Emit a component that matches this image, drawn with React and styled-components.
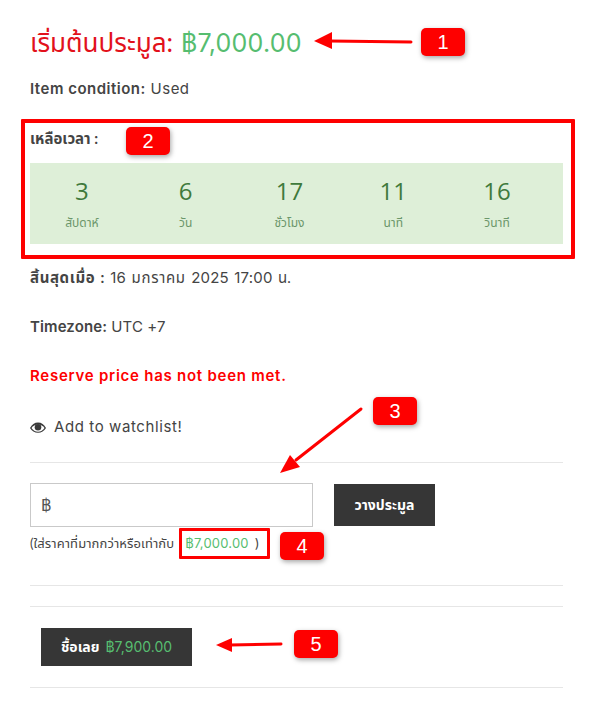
import React from "react";
import styled, { createGlobalStyle } from "styled-components";

const Global = createGlobalStyle`
  html, body { margin: 0; padding: 0; background: #fff; }
  #root { width: 606px; height: 702px; overflow: hidden; position: relative; }
`;
const Page = styled.div`
  position: relative;
  width: 606px;
  height: 702px;
  box-sizing: border-box;
  padding: 0 43px 0 30px;
  font-family: "Inter", "Noto Sans", "Liberation Sans", sans-serif;
  font-size: 15px;
  color: #444;
  overflow: hidden;
`;
const Thai = styled.span`
  font-family: "Lato", "Noto Sans", "Noto Sans Thai", "Liberation Sans", sans-serif;
  font-weight: ${(p) => p.$weight || "inherit"};
  letter-spacing: ${(p) => p.$spacing || 0}px;
`;
const Heading = styled.h2`
  margin: 0;
  padding-top: 24px;
  height: 36px;
  line-height: 36px;
  font-size: 26px;
  font-weight: 400;
  color: #e2111b;
  white-space: nowrap;
`;
const Green = styled.span`
  color: #56bd70;
`;
const HeadPrice = styled(Green)`
  margin-left: 8px;
  font-size: 25px;
  letter-spacing: 0.2px;
`;
const Line = styled.p`
  margin: ${(p) => p.$top}px 0 0;
  height: 24px;
  line-height: 24px;
  font-size: 15px;
  color: ${(p) => p.$color || "#444"};
  letter-spacing: ${(p) => p.$spacing || 0}px;
  word-spacing: ${(p) => p.$words || 0}px;
  white-space: nowrap;
`;
const Strong = styled.b`
  font-weight: 600;
`;
const Counter = styled.div`
  display: grid;
  grid-template-columns: repeat(5, 1fr);
  margin-top: 13px;
  height: 81px;
  padding-right: 14px;
  background: #deefd8;
`;
const Cell = styled.div`
  display: flex;
  flex-direction: column;
  align-items: center;
  color: #3f7a3c;
`;
const Num = styled.span`
  margin-top: 12px;
  height: 32px;
  line-height: 32px;
  font-family: "Open Sans", sans-serif;
  font-size: 24px;
`;
const Unit = styled(Thai)`
  margin-top: 6px;
  height: 20px;
  line-height: 20px;
  font-size: 12px;
  color: #6b966a;
`;
const Watch = styled(Line)`
  display: flex;
  align-items: center;
  gap: 8px;
`;
const Rule = styled.hr`
  margin: ${(p) => p.$top}px 0 0;
  height: 1px;
  border: 0;
  background: #e6e6e6;
`;
const BidRow = styled.div`
  display: flex;
  align-items: center;
  gap: 21px;
  margin-top: 20px;
`;
const Field = styled.div`
  box-sizing: border-box;
  width: 283px;
  height: 44px;
  padding-left: 10px;
  border: 1px solid #c9c9c9;
  line-height: 42px;
  font-size: 16px;
  color: #555;
`;
const Dark = styled.button`
  height: ${(p) => p.$h}px;
  width: ${(p) => p.$w}px;
  padding: 0;
  border: 0;
  background: #363636;
  color: #fff;
  font: inherit;
  font-size: 14px;
  font-weight: 700;
  white-space: nowrap;
`;
const Note = styled.p`
  margin: 6px 0 0;
  height: 20px;
  line-height: 20px;
  font-size: 13px;
  color: #444;
  white-space: nowrap;
`;
const NotePrice = styled(Green)`
  margin-left: 11px;
  margin-right: 6px;
  letter-spacing: 0.2px;
`;
const BuyRow = styled.div`
  padding: 21px 0 21px 11px;
`;
const BuyPrice = styled(Green)`
  font-weight: 400;
  margin-left: 6px;
`;
const Badge = styled.div`
  position: absolute;
  left: ${(p) => p.$x}px;
  top: ${(p) => p.$y}px;
  width: 44px;
  height: 28px;
  border-radius: 5px;
  background: #fe0000;
  color: #fff;
  box-shadow: 1px 2px 5px rgba(0, 0, 0, 0.35);
  text-align: center;
  font: 400 20px/28px "Liberation Sans", Arial, sans-serif;
`;
const Frame = styled.div`
  position: absolute;
  box-sizing: border-box;
  left: ${(p) => p.$x}px;
  top: ${(p) => p.$y}px;
  width: ${(p) => p.$w}px;
  height: ${(p) => p.$h}px;
  border: ${(p) => p.$b}px solid #fe0000;
  border-radius: 1px;
`;
const Arrows = styled.svg`
  position: absolute;
  left: 0;
  top: 0;
  width: 606px;
  height: 702px;
  pointer-events: none;
`;

const cells = [
  ["3", "สัปดาห์"],
  ["6", "วัน"],
  ["17", "ชั่วโมง"],
  ["11", "นาที"],
  ["16", "วินาที"],
];

const Eye = () => (
  <svg width="16" height="11" viewBox="0 0 16 11" aria-hidden="true">
    <path fill="#3a3a3a" d="M0 6C1.800 2.500 4.600.5 8 .5s6.200 2 8 5.500c-1.800 3-4.600 4.800-8 4.800S1.800 9 0 6Z" />
    <path fill="#fff" d="M1.500 6C3 3.800 5.200 2.600 8 2.600S13 3.800 14.500 6C13 8.200 10.800 9.700 8 9.700S3 8.200 1.500 6Z" />
    <circle cx="8" cy="5.300" r="3.300" fill="#3a3a3a" />
  </svg>
);

export default function App() {
  return (
    <Page>
      <Global />
      <Heading>
        <Thai>เริ่มต้นประมูล:</Thai>
        <HeadPrice>฿7,000.00</HeadPrice>
      </Heading>
      <Line $top={17} $spacing={0.5}>
        <Strong>Item condition:</Strong> Used
      </Line>
      <Line $top={25}>
        <Thai $weight={700}>เหลือเวลา :</Thai>
      </Line>
      <Counter>
        {cells.map(([n, u]) => (
          <Cell key={u}>
            <Num>{n}</Num>
            <Unit>{u}</Unit>
          </Cell>
        ))}
      </Counter>
      <Line $top={21} $spacing={0.2} $words={1}>
        <Thai $weight={700} $spacing={0.6}>สิ้นสุดเมื่อ :</Thai> 16 <Thai $spacing={0.7}>มกราคม</Thai> 2025 17:00 <Thai>น.</Thai>
      </Line>
      <Line $top={26} $spacing={0.1}>
        <Strong>Timezone:</Strong> UTC +7
      </Line>
      <Line $top={25} $color="#fe0000" $spacing={0.75}>
        <Strong>Reserve price has not been met.</Strong>
      </Line>
      <Watch $top={27} $spacing={0.6}>
        <Eye /> Add to watchlist!
      </Watch>
      <Rule $top={23} />
      <BidRow>
        <Field>฿</Field>
        <Dark $w={101} $h={42}><Thai>วางประมูล</Thai></Dark>
      </BidRow>
      <Note>
        <Thai $spacing={0.1}>(ใส่ราคาที่มากกว่าหรือเท่ากับ</Thai>
        <NotePrice>฿7,000.00</NotePrice>)
      </Note>
      <Rule $top={32} />
      <Rule $top={20} />
      <BuyRow>
        <Dark $w={151} $h={38}>
          <Thai>ชื้อเลย</Thai>
          <BuyPrice>฿7,900.00</BuyPrice>
        </Dark>
      </BuyRow>
      <Rule $top={0} />

      <Frame $x={21} $y={119} $w={554} $h={140} $b={4} />
      <Frame $x={179} $y={528} $w={91} $h={31} $b={3} />
      <Arrows viewBox="0 0 606 702" aria-hidden="true">
        <g fill="#fe0000" stroke="#fe0000" strokeLinecap="round">
          <path d="M411 42L330 41" strokeWidth="3" fill="none" />
          <path d="M314 41L332 32V49Z" strokeWidth="0" />
          <path d="M361 409L296 460" strokeWidth="3" fill="none" />
          <path d="M280 473L290 455L300 467Z" strokeWidth="0" />
          <path d="M281 644L230 645" strokeWidth="3" fill="none" />
          <path d="M216 645L232 638V652Z" strokeWidth="0" />
        </g>
      </Arrows>
      <Badge $x={421} $y={28}>1</Badge>
      <Badge $x={126} $y={127}>2</Badge>
      <Badge $x={373} $y={397}>3</Badge>
      <Badge $x={280} $y={532}>4</Badge>
      <Badge $x={294} $y={630}>5</Badge>
    </Page>
  );
}
